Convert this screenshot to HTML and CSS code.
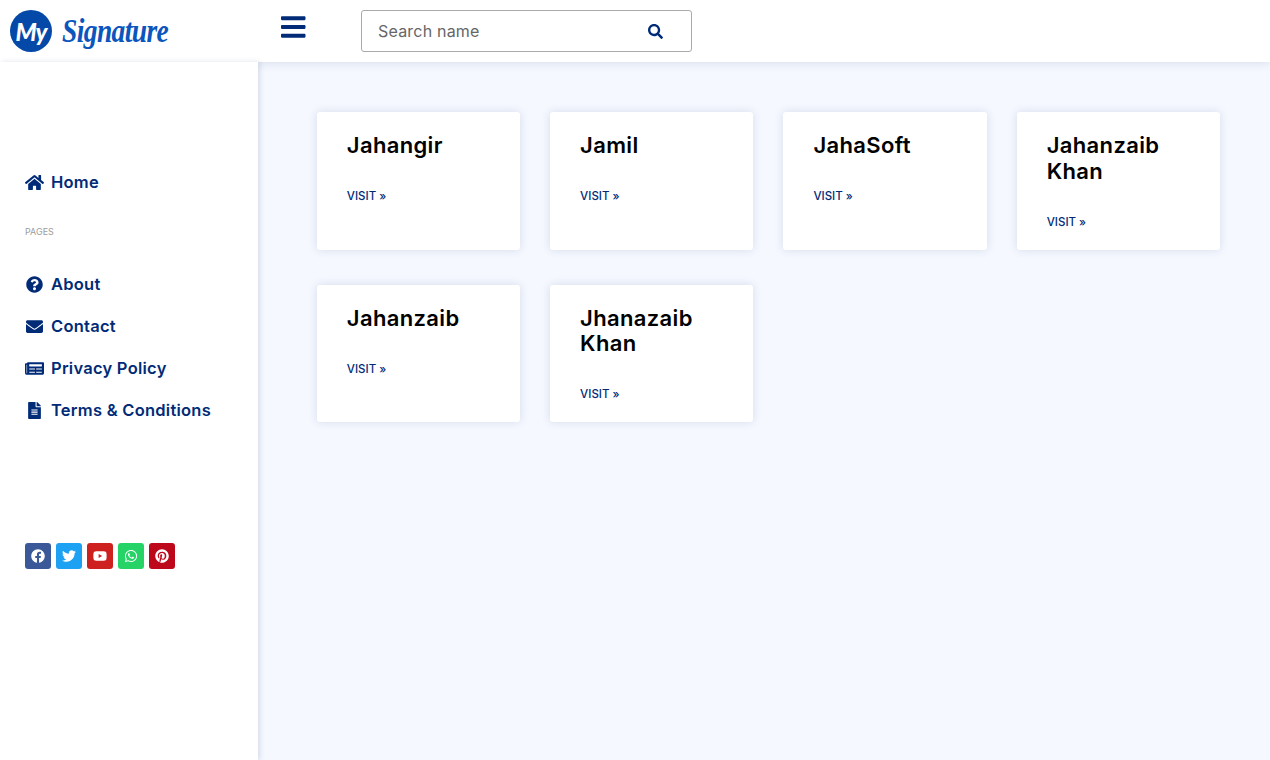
FILE: index.html
```html
<!DOCTYPE html>
<html lang="en">
<head>
<meta charset="utf-8">
<title>My Signature</title>
<link rel="stylesheet" href="styles.css">
</head>
<body>
<header class="topbar">
  <a class="logo" href="#">
    <span class="logo-badge">My</span>
    <span class="logo-word">Signature</span>
  </a>
  <button class="menu-btn" aria-label="Menu">
    <svg class="menu-icon" viewBox="0 0 448 512"><path d="M16 132h416c8.837 0 16-7.163 16-16V76c0-8.837-7.163-16-16-16H16C7.163 60 0 67.163 0 76v40c0 8.837 7.163 16 16 16zm0 160h416c8.837 0 16-7.163 16-16v-40c0-8.837-7.163-16-16-16H16c-8.837 0-16 7.163-16 16v40c0 8.837 7.163 16 16 16zm0 160h416c8.837 0 16-7.163 16-16v-40c0-8.837-7.163-16-16-16H16c-8.837 0-16 7.163-16 16v40c0 8.837 7.163 16 16 16z"/></svg>
  </button>
  <form class="search">
    <span class="search-text">Search name</span>
    <svg class="search-icon" viewBox="0 0 512 512"><path d="M505 442.7L405.3 343c-4.5-4.5-10.6-7-17-7H372c27.6-35.3 44-79.7 44-128C416 93.1 322.9 0 208 0S0 93.1 0 208s93.1 208 208 208c48.3 0 92.7-16.4 128-44v16.3c0 6.4 2.5 12.5 7 17l99.7 99.7c9.4 9.4 24.6 9.4 33.9 0l28.3-28.3c9.4-9.4 9.4-24.6.1-34zM208 336c-70.7 0-128-57.2-128-128 0-70.7 57.2-128 128-128 70.7 0 128 57.2 128 128 0 70.7-57.2 128-128 128z"/></svg>
  </form>
</header>
<div class="layout">
  <aside class="sidebar">
    <a class="nav-item" href="#">
      <svg class="nav-icon" viewBox="0 0 576 512"><path d="M280.37 148.26L96 300.11V464a16 16 0 0 0 16 16l112.06-.29a16 16 0 0 0 15.92-16V368a16 16 0 0 1 16-16h64a16 16 0 0 1 16 16v95.64a16 16 0 0 0 16 16.05L464 480a16 16 0 0 0 16-16V300L295.67 148.26a12.19 12.19 0 0 0-15.3 0zM571.6 251.47L488 182.56V44.05a12 12 0 0 0-12-12h-56a12 12 0 0 0-12 12v72.61L318.47 43a48 48 0 0 0-61 0L4.34 251.47a12 12 0 0 0-1.6 16.9l25.5 31A12 12 0 0 0 45.15 301l235.22-193.74a12.19 12.19 0 0 1 15.3 0L530.9 301a12 12 0 0 0 16.9-1.6l25.5-31a12 12 0 0 0-1.7-16.93z"/></svg>
      <span>Home</span>
    </a>
    <p class="nav-heading">PAGES</p>
    <nav class="nav-list">
      <a class="nav-item" href="#">
        <svg class="nav-icon" viewBox="0 0 512 512"><path d="M504 256c0 136.997-111.043 248-248 248S8 392.997 8 256C8 119.083 119.043 8 256 8s248 111.083 248 248zM262.655 90c-54.497 0-89.255 22.957-116.549 63.758-3.536 5.286-2.353 12.415 2.715 16.258l34.699 26.31c5.205 3.947 12.621 3.008 16.665-2.122 17.864-22.658 30.113-35.797 57.303-35.797 20.429 0 45.698 13.148 45.698 32.958 0 14.976-12.363 22.667-32.534 33.976C247.128 238.528 216 254.941 216 296v4c0 6.627 5.373 12 12 12h56c6.627 0 12-5.373 12-12v-1.333c0-28.462 83.186-29.647 83.186-106.667 0-58.002-60.165-102-116.531-102zM256 338c-25.365 0-46 20.635-46 46 0 25.364 20.635 46 46 46s46-20.636 46-46c0-25.365-20.635-46-46-46z"/></svg>
        <span>About</span>
      </a>
      <a class="nav-item" href="#">
        <svg class="nav-icon" viewBox="0 0 512 512"><path d="M502.3 190.8c3.9-3.1 9.7-.2 9.7 4.7V400c0 26.5-21.5 48-48 48H48c-26.5 0-48-21.5-48-48V195.6c0-5 5.7-7.8 9.7-4.7 22.4 17.4 52.1 39.5 154.1 113.6 21.1 15.4 56.7 47.8 92.2 47.6 35.7.3 72-32.8 92.3-47.6 102-74.1 131.6-96.3 154-113.7zM256 320c23.2.4 56.6-29.2 73.4-41.4 132.7-96.3 142.8-104.7 173.4-128.7 5.8-4.5 9.2-11.5 9.2-18.9v-19c0-26.5-21.5-48-48-48H48C21.5 64 0 85.5 0 112v19c0 7.4 3.4 14.3 9.2 18.9 30.6 23.9 40.7 32.4 173.4 128.7 16.8 12.2 50.2 41.8 73.4 41.4z"/></svg>
        <span>Contact</span>
      </a>
      <a class="nav-item" href="#">
        <svg class="nav-icon" viewBox="0 0 576 512"><path d="M552 64H88c-13.255 0-24 10.745-24 24v8H24c-13.255 0-24 10.745-24 24v272c0 30.928 25.072 56 56 56h472c26.51 0 48-21.49 48-48V88c0-13.255-10.745-24-24-24zM56 400a8 8 0 0 1-8-8V144h16v248a8 8 0 0 1-8 8zm236-16H140c-6.627 0-12-5.373-12-12v-8c0-6.627 5.373-12 12-12h152c6.627 0 12 5.373 12 12v8c0 6.627-5.373 12-12 12zm208 0H348c-6.627 0-12-5.373-12-12v-8c0-6.627 5.373-12 12-12h152c6.627 0 12 5.373 12 12v8c0 6.627-5.373 12-12 12zm-208-96H140c-6.627 0-12-5.373-12-12v-8c0-6.627 5.373-12 12-12h152c6.627 0 12 5.373 12 12v8c0 6.627-5.373 12-12 12zm208 0H348c-6.627 0-12-5.373-12-12v-8c0-6.627 5.373-12 12-12h152c6.627 0 12 5.373 12 12v8c0 6.627-5.373 12-12 12zm0-96H140c-6.627 0-12-5.373-12-12v-40c0-6.627 5.373-12 12-12h360c6.627 0 12 5.373 12 12v40c0 6.627-5.373 12-12 12z"/></svg>
        <span>Privacy Policy</span>
      </a>
      <a class="nav-item" href="#">
        <svg class="nav-icon" viewBox="0 0 384 512"><path d="M224 136V0H24C10.7 0 0 10.7 0 24v464c0 13.3 10.7 24 24 24h336c13.3 0 24-10.7 24-24V160H248c-13.2 0-24-10.8-24-24zm64 236c0 6.6-5.4 12-12 12H108c-6.6 0-12-5.4-12-12v-8c0-6.6 5.4-12 12-12h168c6.6 0 12 5.4 12 12v8zm0-64c0 6.6-5.4 12-12 12H108c-6.6 0-12-5.4-12-12v-8c0-6.6 5.4-12 12-12h168c6.6 0 12 5.4 12 12v8zm0-72v8c0 6.6-5.4 12-12 12H108c-6.6 0-12-5.4-12-12v-8c0-6.6 5.4-12 12-12h168c6.6 0 12 5.4 12 12zm96-114.1v6.1H256V0h6.1c6.4 0 12.5 2.5 17 7l97.9 98c4.5 4.5 7 10.6 7 16.9z"/></svg>
        <span>Terms &amp; Conditions</span>
      </a>
    </nav>
    <div class="socials">
      <a class="social social-fb" href="#" aria-label="Facebook"><svg viewBox="0 0 512 512"><path d="M504 256C504 119 393 8 256 8S8 119 8 256c0 123.78 90.69 226.38 209.25 245V327.69h-63V256h63v-54.64c0-62.15 37-96.48 93.67-96.48 27.14 0 55.52 4.84 55.52 4.84v61h-31.28c-30.8 0-40.41 19.12-40.41 38.73V256h68.78l-11 71.69h-57.78V501C413.31 482.38 504 379.78 504 256z"/></svg></a>
      <a class="social social-tw" href="#" aria-label="Twitter"><svg viewBox="0 0 512 512"><path d="M459.37 151.716c.325 4.548.325 9.097.325 13.645 0 138.72-105.583 298.558-298.558 298.558-59.452 0-114.68-17.219-161.137-47.106 8.447.974 16.568 1.299 25.34 1.299 49.055 0 94.213-16.568 130.274-44.832-46.132-.975-84.792-31.188-98.112-72.772 6.498.974 12.995 1.624 19.818 1.624 9.421 0 18.843-1.3 27.614-3.573-48.081-9.747-84.143-51.98-84.143-102.985v-1.299c13.969 7.797 30.214 12.67 47.431 13.319-28.264-18.843-46.781-51.005-46.781-87.391 0-19.492 5.197-37.36 14.294-52.954 51.655 63.675 129.3 105.258 216.365 109.807-1.624-7.797-2.599-15.918-2.599-24.04 0-57.828 46.782-104.934 104.934-104.934 30.213 0 57.502 12.67 76.67 33.137 23.715-4.548 46.456-13.32 66.599-25.34-7.798 24.366-24.366 44.833-46.132 57.827 21.117-2.273 41.584-8.122 60.426-16.243-14.292 20.791-32.161 39.308-52.628 54.253z"/></svg></a>
      <a class="social social-yt" href="#" aria-label="YouTube"><svg viewBox="0 0 576 512"><path d="M549.655 124.083c-6.281-23.65-24.787-42.276-48.284-48.597C458.781 64 288 64 288 64S117.22 64 74.629 75.486c-23.497 6.322-42.003 24.947-48.284 48.597-11.412 42.867-11.412 132.305-11.412 132.305s0 89.438 11.412 132.305c6.281 23.65 24.787 41.5 48.284 47.821C117.22 448 288 448 288 448s170.78 0 213.371-11.486c23.497-6.321 42.003-24.171 48.284-47.821 11.412-42.867 11.412-132.305 11.412-132.305s0-89.438-11.412-132.305zm-317.51 213.508V175.185l142.739 81.205-142.739 81.201z"/></svg></a>
      <a class="social social-wa" href="#" aria-label="WhatsApp"><svg viewBox="0 0 448 512"><path d="M380.9 97.1C339 55.1 283.2 32 223.9 32c-122.4 0-222 99.6-222 222 0 39.1 10.2 77.3 29.6 111L0 480l117.7-30.9c32.4 17.7 68.9 27 106.1 27h.1c122.3 0 224.1-99.6 224.1-222 0-59.3-25.2-115-67.1-157zm-157 341.6c-33.2 0-65.7-8.9-94-25.7l-6.7-4-69.8 18.3L72 359.2l-4.4-7c-18.5-29.4-28.2-63.3-28.2-98.2 0-101.7 82.8-184.5 184.6-184.5 49.3 0 95.6 19.2 130.4 54.1 34.8 34.9 56.2 81.2 56.1 130.5 0 101.8-84.9 184.6-186.6 184.6zm101.2-138.2c-5.5-2.8-32.8-16.2-37.9-18-5.1-1.9-8.8-2.8-12.5 2.8-3.7 5.6-14.3 18-17.6 21.8-3.2 3.7-6.5 4.2-12 1.4-32.6-16.3-54-29.1-75.5-66-5.7-9.8 5.7-9.1 16.3-30.3 1.8-3.7.9-6.9-.5-9.7-1.4-2.8-12.5-30.1-17.1-41.2-4.5-10.8-9.1-9.3-12.5-9.5-3.2-.2-6.9-.2-10.6-.2-3.7 0-9.7 1.4-14.8 6.9-5.1 5.6-19.4 19-19.4 46.3 0 27.3 19.9 53.7 22.6 57.4 2.8 3.7 39.1 59.7 94.8 83.8 35.2 15.2 49 16.5 66.6 13.9 10.7-1.6 32.8-13.4 37.4-26.4 4.6-13 4.6-24.1 3.2-26.4-1.3-2.5-5-3.9-10.5-6.6z"/></svg></a>
      <a class="social social-pi" href="#" aria-label="Pinterest"><svg viewBox="0 0 496 512"><path d="M496 256c0 137-111 248-248 248-25.6 0-50.2-3.9-73.4-11.1 10.1-16.5 25.2-43.5 30.8-65 3-11.6 15.4-59 15.4-59 8.1 15.4 31.7 28.5 56.8 28.5 74.8 0 128.7-68.8 128.7-154.3 0-81.9-66.9-143.2-152.9-143.2-107 0-163.9 71.8-163.9 150.1 0 36.4 19.4 81.7 50.3 96.1 4.7 2.2 7.2 1.2 8.3-3.3.8-3.4 5-20.3 6.9-28.1.6-2.5.3-4.7-1.7-7.1-10.1-12.5-18.3-35.3-18.3-56.6 0-54.7 41.4-107.6 112-107.6 60.9 0 103.6 41.5 103.6 100.9 0 67.1-33.9 113.6-78 113.6-24.3 0-42.6-20.1-36.7-44.8 7-29.5 20.5-61.3 20.5-82.6 0-19-10.2-34.9-31.4-34.9-24.9 0-44.9 25.7-44.9 60.2 0 22 7.4 36.8 7.4 36.8s-24.5 103.8-29 123.2c-5 21.4-3 51.6-.9 71.2C65.4 450.9 0 361.1 0 256 0 119 111 8 248 8s248 111 248 248z"/></svg></a>
    </div>
  </aside>
  <main class="content">
    <article class="card"><h2 class="card-title">Jahangir</h2><a class="card-link" href="#">VISIT »</a></article>
    <article class="card"><h2 class="card-title">Jamil</h2><a class="card-link" href="#">VISIT »</a></article>
    <article class="card"><h2 class="card-title">JahaSoft</h2><a class="card-link" href="#">VISIT »</a></article>
    <article class="card"><h2 class="card-title">Jahanzaib Khan</h2><a class="card-link" href="#">VISIT »</a></article>
    <article class="card"><h2 class="card-title">Jahanzaib</h2><a class="card-link" href="#">VISIT »</a></article>
    <article class="card"><h2 class="card-title">Jhanazaib Khan</h2><a class="card-link" href="#">VISIT »</a></article>
  </main>
</div>
</body>
</html>
```
FILE: styles.css
```css
* { box-sizing: border-box; }
html, body { margin: 0; height: 100%; }
body {
  font-family: Inter, "Noto Sans", sans-serif;
  background: #fff;
  color: #012b77;
  overflow: hidden;
}
a { color: inherit; text-decoration: none; }

.topbar {
  height: 62px;
  display: flex;
  align-items: center;
  background: #fff;
  position: relative;
  z-index: 1;
  box-shadow: 0 0 10px rgba(30, 50, 100, .16);
}
.logo {
  width: 281px;
  padding-left: 10px;
  display: flex;
  align-items: center;
  gap: 10px;
}
.logo-badge {
  width: 42px;
  height: 42px;
  border-radius: 50%;
  background: #0449a8;
  color: #fff;
  display: flex;
  align-items: center;
  justify-content: center;
  font: italic 900 24px Lato, sans-serif;
  letter-spacing: -1px;
}
.logo-word {
  font: italic 700 27.5px "Liberation Serif", serif;
  letter-spacing: -.6px;
  color: #0c55bd;
  transform: scaleY(1.25);
}
.menu-btn {
  width: 80px;
  height: 62px;
  padding: 0 0 8px;
  border: 0;
  background: none;
  display: flex;
  align-items: center;
}
.menu-icon { width: 24.5px; height: 28px; fill: #012b77; }
.search {
  width: 331px;
  height: 42px;
  padding: 0 28px 0 16px;
  border: 1px solid #aaa;
  border-radius: 3px;
  display: flex;
  align-items: center;
  justify-content: space-between;
}
.search-text { font-size: 16px; letter-spacing: .2px; color: #666; }
.search-icon { width: 15px; height: 15px; fill: #012b77; }

.layout { display: flex; height: 698px; }
.sidebar {
  width: 258px;
  flex: none;
  padding: 106px 0 0 25px;
  background: #fff;
  position: relative;
  z-index: 2;
  box-shadow: 2px 0 5px rgba(30, 50, 100, .14);
}
.nav-item {
  height: 28px;
  display: flex;
  align-items: center;
  gap: 7px;
  font-size: 16.5px;
  font-weight: 600;
  letter-spacing: .25px;
}
.nav-icon { width: 19px; height: 17px; fill: #012b77; flex: none; }
.nav-heading {
  margin: 26px 0 0;
  height: 20px;
  line-height: 20px;
  font-size: 9px;
  color: #a09c9c;
}
.nav-list {
  margin-top: 28px;
  display: flex;
  flex-direction: column;
  gap: 14px;
}
.socials { margin-top: 119px; display: flex; gap: 5px; }
.social {
  width: 26px;
  height: 26px;
  border-radius: 3px;
  display: flex;
  align-items: center;
  justify-content: center;
}
.social svg { width: 14px; height: 14px; fill: #fff; }
.social-fb { background: #3b5998; }
.social-tw { background: #1da1f2; }
.social-yt { background: #cd201f; }
.social-wa { background: #25d366; }
.social-pi { background: #bd081c; }

.content {
  flex: 1;
  padding: 50px 50px 0 58.8px;
  background: #f5f8ff;
  display: grid;
  grid-template-columns: repeat(4, 1fr);
  grid-auto-rows: 137.5px;
  align-content: start;
  gap: 35px 30px;
}
.card {
  padding: 21px 30px 0;
  background: #fff;
  border-radius: 3px;
  box-shadow: 0 0 10px rgba(30, 50, 100, .14);
}
.card-title {
  margin: 0 0 28.5px;
  font-size: 22px;
  line-height: 25.5px;
  font-weight: 600;
  letter-spacing: .35px;
  color: #000;
}
.card-link { display: block; font-size: 11.5px; font-weight: 500; line-height: 18px; color: #012b77; }
```
